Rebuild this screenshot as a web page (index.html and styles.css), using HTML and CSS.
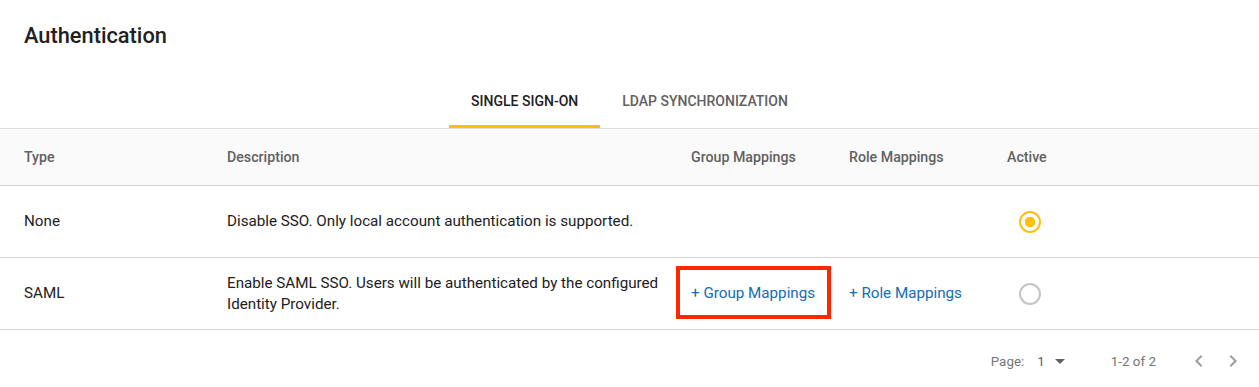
FILE: index.html
```html
<!DOCTYPE html>
<html lang="en">

<head>
    <meta charset="UTF-8">
    <meta name="viewport" content="width=device-width, initial-scale=1.0">
    <title>Authentication</title>

    <link rel="stylesheet" href="styles.css">
</head>

<body>
    <h1 class="page-title">Authentication</h1>

    <nav class="tabs">
        <a class="tab active" href="#">Single Sign-On</a>
        <a class="tab" href="#">LDAP Synchronization</a>
    </nav>

    <div class="table">
        <div class="row head">
            <div class="cell">Type</div>
            <div class="cell">Description</div>
            <div class="cell">Group Mappings</div>
            <div class="cell">Role Mappings</div>
            <div class="cell">Active</div>
        </div>
        <div class="row">
            <div class="cell">None</div>
            <div class="cell">Disable SSO. Only local account authentication is supported.</div>
            <div class="cell"></div>
            <div class="cell"></div>
            <div class="cell"><span class="radio checked"></span></div>
        </div>
        <div class="row">
            <div class="cell">SAML</div>
            <div class="cell">Enable SAML SSO. Users will be authenticated by the configured Identity Provider.</div>
            <div class="cell"><a class="link highlight" href="#">+ Group Mappings</a></div>
            <div class="cell"><a class="link" href="#">+ Role Mappings</a></div>
            <div class="cell"><span class="radio"></span></div>
        </div>
    </div>

    <div class="pager">
        <span class="pager-label">Page:</span>
        <span class="pager-select">1 <span class="caret"></span></span>
        <span class="pager-range">1-2 of 2</span>
        <span class="pager-nav">
            <svg width="24" height="24" viewBox="0 0 24 24"><path d="M15.4 7.4 14 6l-6 6 6 6 1.4-1.4L10.8 12z" fill="#9e9e9e"/></svg>
            <svg width="24" height="24" viewBox="0 0 24 24"><path d="M10 6 8.6 7.4 13.2 12l-4.6 4.6L10 18l6-6z" fill="#9e9e9e"/></svg>
        </span>
    </div>
</body>

</html>
```

FILE: styles.css
```css
body {
    font-family: 'Roboto', 'Liberation Sans', sans-serif;
    background-color: #fff;
    color: #212121;
    margin: 0;
    padding: 0;
}

.page-title {
    margin: 0;
    padding: 25px 24px 0;
    height: 49px;
    font-size: 21.8px;
    line-height: 22px;
    font-weight: 500;
    color: #212121;
}

.tabs {
    display: flex;
    justify-content: center;
}

.tab {
    box-sizing: border-box;
    height: 54px;
    padding: 3px 22px 0;
    line-height: 48px;
    border-bottom: 3px solid transparent;
    font-size: 14px;
    font-weight: 500;
    text-transform: uppercase;
    text-decoration: none;
    color: #616161;
}

.tab.active {
    color: #212121;
    border-bottom-color: #fcc10f;
}

.table {
    border-top: 1px solid #e0e0e0;
}

.row {
    box-sizing: border-box;
    display: grid;
    grid-template-columns: 203px 464px 158px 158px 1fr;
    align-items: center;
    height: 72px;
    padding-left: 24px;
    border-bottom: 1px solid #d6d6d6;
    font-size: 15.2px;
    line-height: 21px;
}

.row.head {
    height: 57px;
    background-color: #fafafa;
    font-size: 14.2px;
    font-weight: 500;
    color: #616161;
}

.cell {
    padding-right: 24px;
}

.link {
    color: #136cb6;
    text-decoration: none;
}

.highlight {
    position: relative;
}

.highlight::after {
    content: "";
    position: absolute;
    top: -18px;
    right: -16px;
    bottom: -17px;
    left: -15px;
    border: 4px solid #ff2600;
}

.radio {
    display: block;
    box-sizing: border-box;
    width: 22px;
    height: 22px;
    margin-left: 12px;
    border: 2px solid #c4c4c4;
    border-radius: 50%;
}

.radio.checked {
    border-color: #fcc10f;
    background: radial-gradient(circle, #fcc10f 0 5px, transparent 5.5px);
}

.pager {
    display: flex;
    justify-content: flex-end;
    align-items: center;
    height: 62px;
    padding-right: 14px;
    font-size: 13.4px;
    color: #757575;
}

.pager-select {
    display: flex;
    align-items: center;
    margin-left: 13px;
    color: #616161;
}

.caret {
    width: 0;
    height: 0;
    margin-left: 10px;
    border-left: 5px solid transparent;
    border-right: 5px solid transparent;
    border-top: 5px solid #616161;
}

.pager-range {
    margin-left: 46px;
}

.pager-nav {
    display: flex;
    gap: 10px;
    margin-left: 31px;
}
```
